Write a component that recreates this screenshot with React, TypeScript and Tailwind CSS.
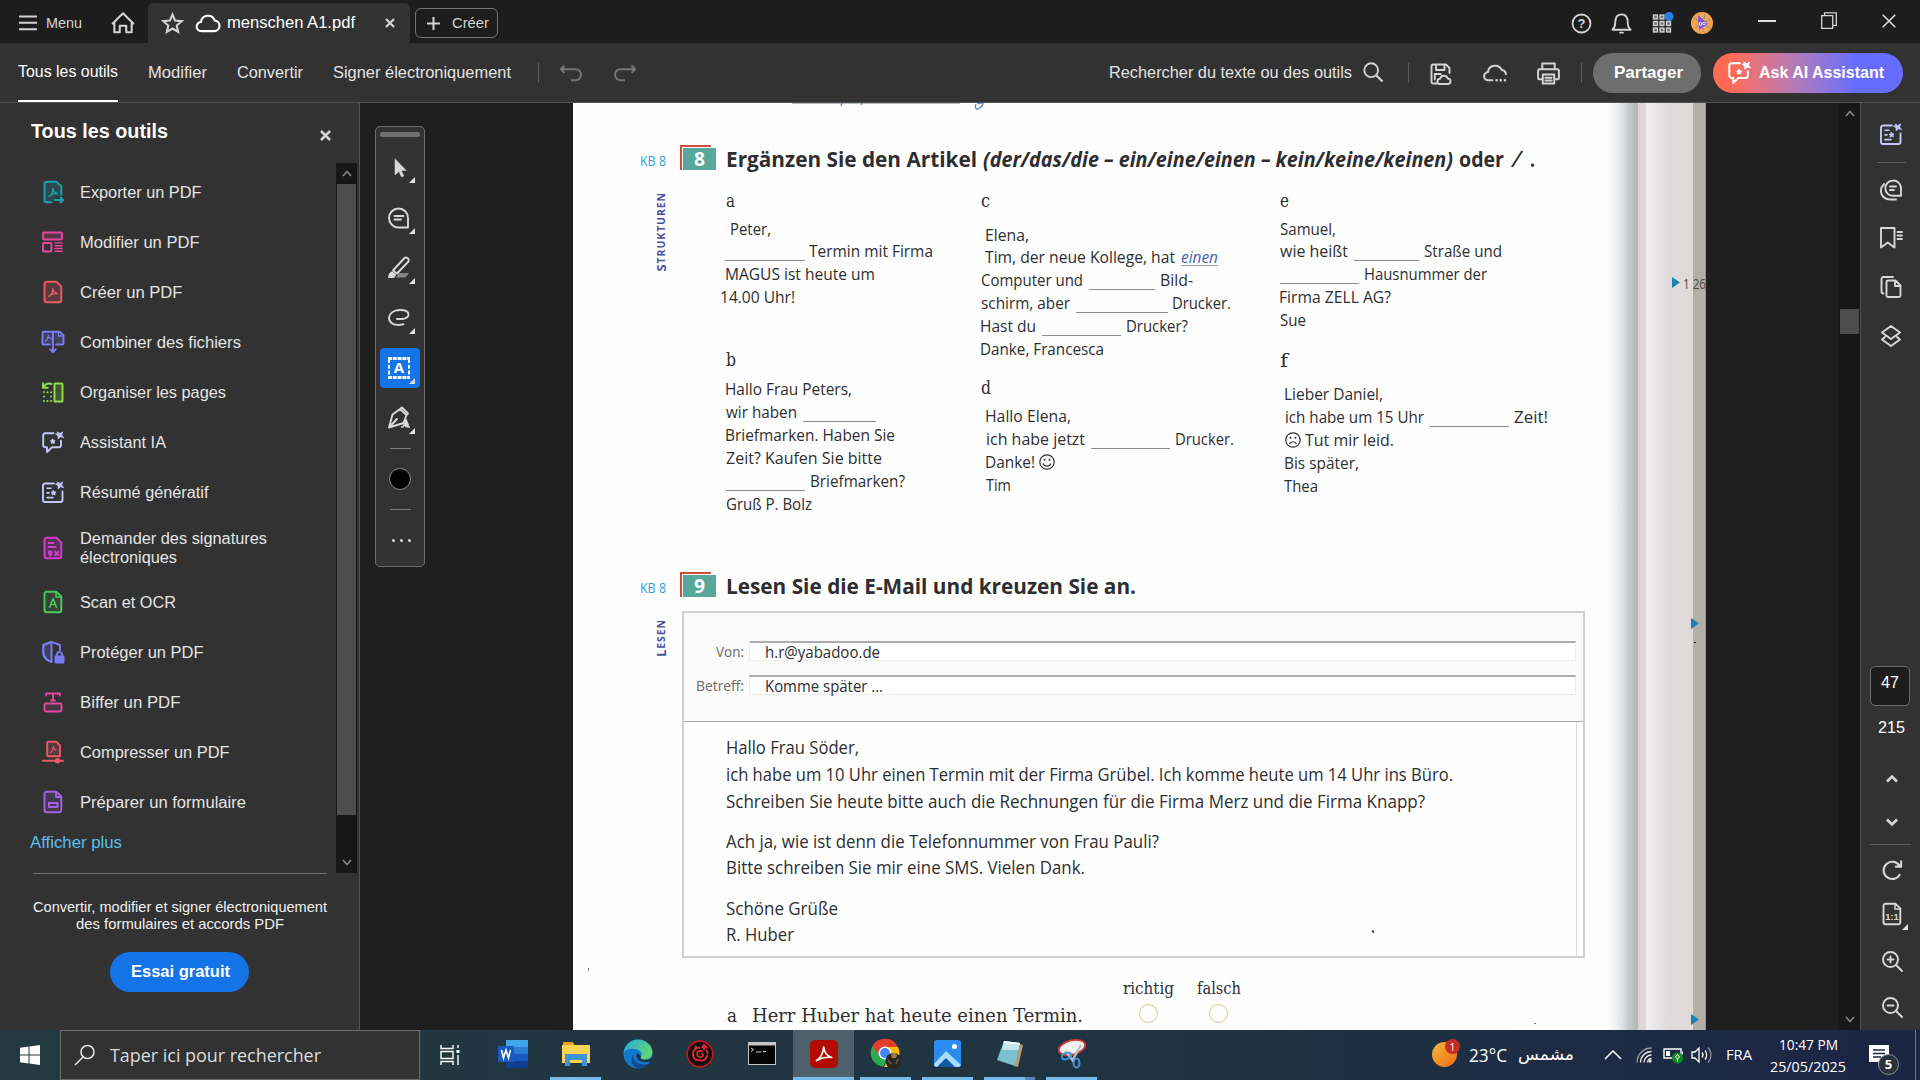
import React, { useLayoutEffect, useRef } from "react";

type Kids = { children?: React.ReactNode };

/** Sets one run of text to an exact advance width. */
function Fit({ w, className = "", children }: Kids & { w: number; className?: string }) {
  const ref = useRef<HTMLSpanElement>(null);
  useLayoutEffect(() => {
    const el = ref.current;
    if (!el) return;
    el.style.transform = "none";
    const natural = el.getBoundingClientRect().width;
    if (natural > 0) el.style.transform = `scaleX(${w / natural})`;
  });
  return (
    <span className={`inline-block shrink-0 whitespace-nowrap ${className}`} style={{ width: w }}>
      <span ref={ref} className="inline-block origin-left whitespace-nowrap">
        {children}
      </span>
    </span>
  );
}

function Ico({ s = 24, c = "", children, sw = 1.9 }: Kids & { s?: number; c?: string; sw?: number }) {
  return (
    <svg
      width={s}
      height={s}
      viewBox="0 0 24 24"
      className={`block shrink-0 ${c}`}
      fill="none"
      stroke="currentColor"
      strokeWidth={sw}
      strokeLinecap="round"
      strokeLinejoin="round"
    >
      {children}
    </svg>
  );
}

const pdfMark = "M8 16.5c2.2-1.4 3.8-4 3.9-8M11.9 8.8c.3 2.6 2 4.3 4.5 4.7M8 16c2-1.6 5-2.8 8.4-2.5";
const star4 = "M16.3 2.2l2.7 1.3 2.8-1.6-1.2 3.1 2 2.6-3-.8-2.5 2-.1-3.1-2.5-1.7 3-.6z";

function AiChat({ s = 24, c = "" }) {
  return (
    <Ico s={s} c={c}>
      <path d="M12.5 3.2H4.2a2 2 0 0 0-2 2v10a2 2 0 0 0 2 2H6V22l5-4.8h7a2 2 0 0 0 2-2v-4.4" />
      <path d={star4} fill="currentColor" strokeWidth="0.8" />
      <path d="M11.5 9l1 1.2 1.6.3-.9 1.3.2 1.6-1.6-.5-1.5.7.1-1.7-1-1.2 1.5-.5z" fill="currentColor" strokeWidth="0.8" />
    </Ico>
  );
}
function AiDoc({ s = 24, c = "" }) {
  return (
    <Ico s={s} c={c}>
      <path d="M12.8 3.5H4a2 2 0 0 0-2 2V20a2 2 0 0 0 2 2h15.500a2 2 0 0 0 2-2v-8.500" />
      <path d="M6 8.200h4M6 12.900h2M6 17.600h6" strokeWidth="1.6" />
      <path d={star4} fill="currentColor" strokeWidth="0.8" />
      <path d="M12.300 10.500l1 1.200 1.600.3-.9 1.300.2 1.600-1.600-.5-1.500.7.1-1.700-1-1.200 1.500-.5z" fill="currentColor" strokeWidth="0.8" />
    </Ico>
  );
}

const docPath = "M5.500 1.800h9.800l5 4.600v13.800a2 2 0 0 1-2 2H5.500a2 2 0 0 1-2-2V3.800a2 2 0 0 1 2-2z";

const tools: { label: string[]; w: number[]; icon: React.ReactNode }[] = [
  {
    label: ["Exporter un PDF"],
    w: [121.5],
    icon: (
      <Ico c="text-[#17a5ae]">
        <path d="M10.500 22.200h-5a2 2 0 0 1-2-2V3.800a2 2 0 0 1 2-2h9.800l5 4.600V15" fill="#17a5ae33" />
        <path d={pdfMark} strokeWidth="1.400" />
        <path d="M14 20h8M19.500 17.300l2.700 2.700-2.700 2.700" />
      </Ico>
    ),
  },
  {
    label: ["Modifier un PDF"],
    w: [119.5],
    icon: (
      <Ico c="text-[#e5479d]">
        <rect x="2" y="2.500" width="19" height="7" rx="1" fill="#e5479d33" />
        <rect x="2" y="13" width="8.500" height="8.500" rx="1" />
        <path d="M14 12.900h7.200M14 15.700h7.200M14 18.500h7.200M14 21.300h7.200" strokeWidth="1.400" />
      </Ico>
    ),
  },
  {
    label: ["Créer un PDF"],
    w: [102.5],
    icon: (
      <Ico c="text-[#ee5a64]">
        <path d={docPath} fill="#ee5a6433" />
        <path d={pdfMark} strokeWidth="1.400" />
      </Ico>
    ),
  },
  {
    label: ["Combiner des fichiers"],
    w: [161],
    icon: (
      <Ico c="text-[#7a7cf5]">
        <path d="M9 14.500H2.500A1 1 0 0 1 1.500 13.500V2.800A1 1 0 0 1 2.500 1.800H12V12M15 14.500h6.500a1 1 0 0 0 1-1V5.500L19 1.800H12" fill="#7a7cf533" />
        <path d="M4.500 11c1.700-1 2.700-3 2.800-5.500.3 2 1.300 3 3 3.300M17.500 2v4h4.500" strokeWidth="1.300" />
        <path d="M12 9v12.500M9.300 19.300l2.700 3 2.700-3" />
      </Ico>
    ),
  },
  {
    label: ["Organiser les pages"],
    w: [146],
    icon: (
      <Ico c="text-[#8ee04a]">
        <rect x="13.500" y="3.500" width="8" height="18" rx=".6" fill="#8ee04a33" />
        <path d="M2 3.200v4.600h4.800M2.500 7.500C4.500 3.700 7.500 3 10.500 4" />
        <path d="M3 12v.1M3 16.500v.1M3 21v.1M6.500 12.300h.1M10 12.300h.1M6.500 21h.1M10 21h.1M10 16.500v.1" strokeWidth="2" />
      </Ico>
    ),
  },
  { label: ["Assistant IA"], w: [86], icon: <AiChat c="text-[#c5c5ff]" /> },
  { label: ["Résumé génératif"], w: [128.5], icon: <AiDoc c="text-[#c5c5ff]" /> },
  {
    label: ["Demander des signatures", "électroniques"],
    w: [187, 97],
    icon: (
      <Ico c="text-[#d83bd2]">
        <path d={docPath} fill="#d83bd233" />
        <path d="M7.500 7h5M7.500 11h7" />
        <path d="M8 15.500h2.500v2L9.300 19.500 8 17.500zM14 15.700l3.300 3.300M17.300 15.700L14 19" />
      </Ico>
    ),
  },
  {
    label: ["Scan et OCR"],
    w: [96],
    icon: (
      <Ico c="text-[#4bca5f]">
        <path d={docPath} fill="#4bca5f22" />
        <path d="M15 2v5h5M8.500 17.500l3.500-9 3.500 9M9.700 14.500h4.600" strokeWidth="1.500" />
      </Ico>
    ),
  },
  {
    label: ["Protéger un PDF"],
    w: [123.5],
    icon: (
      <Ico c="text-[#7a7cf5]">
        <path d="M19 10V5L10.500 1.800 2.300 5v7c0 5 4 8.500 8.200 10" />
        <path d="M10.500 2v20C6 20.500 2.300 17 2.300 12V5z" fill="#7a7cf533" />
        <rect x="14.500" y="16.500" width="8" height="6" fill="currentColor" />
        <path d="M16 16v-1.500a2.500 2.500 0 0 1 5 0V16" />
      </Ico>
    ),
  },
  {
    label: ["Biffer un PDF"],
    w: [100.5],
    icon: (
      <Ico c="text-[#e5479d]">
        <path d="M5 5.500V3.500h14v2M12 3.500v7M10 10.500h4" />
        <rect x="3.500" y="13.500" width="17" height="8" rx="1.500" fill="#e5479d22" />
      </Ico>
    ),
  },
  {
    label: ["Compresser un PDF"],
    w: [149.5],
    icon: (
      <Ico c="text-[#ee5a64]">
        <path d="M7.500 1.800h8l3.500 3.500v11H7.500a1.300 1.300 0 0 1-1.300-1.300V3a1.300 1.300 0 0 1 1.300-1.200z" fill="#ee5a6433" />
        <path d="M9.500 12.500c1.700-1 2.700-3 2.800-6 .3 2.300 1.300 3.300 3 3.500" strokeWidth="1.200" />
        <path d="M2 20.700h20" />
        <circle cx="16.500" cy="20.700" r="1.800" fill="#ee5a64" />
      </Ico>
    ),
  },
  {
    label: ["Préparer un formulaire"],
    w: [166],
    icon: (
      <Ico c="text-[#a262e6]">
        <path d={docPath} fill="#a262e622" />
        <path d="M15 2v5h5" />
        <rect x="8" y="13" width="8.500" height="4" />
      </Ico>
    ),
  },
];

const Tri = ({ c = "" }) => (
  <svg width="6" height="6" viewBox="0 0 6 6" className={`absolute ${c}`}>
    <path d="M6 0v6H0z" fill="#e0e0e0" />
  </svg>
);

/* ---------- top bars ---------- */

function TitleBar() {
  return (
    <header className="flex h-[43px] shrink-0 bg-[#1d1d1d] text-[#d4d4d4]">
      <div className="flex w-[148px] items-center pt-[3px]">
        <svg width="18" height="16" viewBox="0 0 18 16" className="ml-[19px]">
          <path d="M0 1.500h18M0 7.800h18M0 14.200h18" stroke="#d4d4d4" strokeWidth="2" />
        </svg>
        <Fit w={36} className="ml-[9px] text-[15.500px]">Menu</Fit>
        <Ico s={26} c="ml-[28px]" sw={1.900}>
          <path d="M2.500 12.500L12 3l9.500 9.500M4 11v9.500h5v-6h6v6h5V11" />
        </Ico>
      </div>
      <div className="mt-[3px] flex w-[262px] items-center rounded-t-[5px] bg-[#323232]">
        <Ico s={23} c="ml-[13px]" sw={2.200}>
          <path d="M12 2.800l2.700 6.200 6.800.6-5.100 4.500 1.500 6.600-5.900-3.500-5.900 3.500 1.500-6.600-5.100-4.500 6.800-.6z" strokeLinejoin="miter" />
        </Ico>
        <Ico s={26} c="ml-[11px] text-white" sw={1.900}>
          <path d="M6 19.500a4.200 4.200 0 0 1-.5-8.400 6.500 6.500 0 0 1 12.600-1.500 5 5 0 0 1 .4 9.900z" />
        </Ico>
        <Fit w={128} className="ml-[6px] text-[16px] text-white">menschen A1.pdf</Fit>
        <svg width="10" height="10" viewBox="0 0 10 10" className="ml-[30px]">
          <path d="M1 1l8 8M9 1L1 9" stroke="#d4d4d4" strokeWidth="2.200" />
        </svg>
      </div>
      <div className="ml-[5px] mt-[8px] flex h-[30px] w-[83px] items-center rounded-[6px] border border-[#747474]">
        <svg width="13" height="13" viewBox="0 0 13 13" className="ml-[11px]">
          <path d="M6.500 0v13M0 6.500h13" stroke="#d4d4d4" strokeWidth="2" />
        </svg>
        <Fit w={37} className="ml-[12px] text-[15.500px]">Créer</Fit>
      </div>
      <div className="grow" />
      <div className="flex h-[43px] items-center pt-[3px]">
        <svg width="21" height="21" viewBox="0 0 21 21">
          <circle cx="10.500" cy="10.500" r="9" fill="none" stroke="#d4d4d4" strokeWidth="1.800" />
          <text x="10.500" y="15" textAnchor="middle" fontSize="13" fontWeight="bold" fill="#d4d4d4" fontFamily="Liberation Sans, sans-serif">?</text>
        </svg>
        <Ico s={23} c="ml-[18px]">
          <path d="M2.500 18.500h19c-2.500-2-3-4-3-7.500 0-5-2-8.500-6.500-8.500S5.500 6 5.500 11c0 3.500-.5 5.500-3 7.500zM10.500 21.500h3" />
        </Ico>
        <svg width="22" height="22" viewBox="0 0 22 22" className="ml-[19px]">
          {[0, 1, 2].map((r) =>
            [0, 1, 2].map((k) => (
              <rect key={`${r}${k}`} x={1.500 + k * 6.500} y={3 + r * 6.500} width="4" height="4" fill="#777" stroke="#d4d4d4" strokeWidth="1.300" />
            ))
          )}
          <circle cx="17" cy="4.500" r="4.500" fill="#2680eb" />
        </svg>
        <svg width="22" height="22" viewBox="0 0 22 22" className="ml-[17px]">
          <circle cx="11" cy="11" r="11" fill="#f4a44e" />
          <path d="M3 6l5 3M4 16l4-3M14 2l-1 5M19 7l-5 3M19 16l-4-2M12 20v-4" stroke="#7d8fa8" strokeWidth="1" />
          <path d="M7 3l10 9-9 6z" fill="#7b55e8" />
          <circle cx="9.500" cy="12" r="1.800" fill="#fff" />
          <circle cx="13" cy="11.500" r="1.600" fill="#fff" />
          <circle cx="9.500" cy="12" r=".8" fill="#333" />
          <circle cx="13" cy="11.500" r=".7" fill="#333" />
        </svg>
      </div>
      <div className="flex h-[41px] items-center">
        <div className="ml-[45px] h-[2px] w-[18px] bg-[#e0e0e0]" />
        <svg width="16" height="17" viewBox="0 0 16 17" className="ml-[45px]">
          <path d="M.7 3.700h11v12.600h-11zM3.500 3.500V.8h11.800v12.500h-3" fill="none" stroke="#d4d4d4" strokeWidth="1.300" />
        </svg>
        <svg width="14" height="14" viewBox="0 0 14 14" className="ml-[45px] mr-[24px]">
          <path d="M.7.7l12.600 12.600M13.300.7L.7 13.300" stroke="#e0e0e0" strokeWidth="1.500" />
        </svg>
      </div>
    </header>
  );
}

const Sep = ({ c = "" }) => <div className={`h-[20px] w-px shrink-0 bg-[#5c5c5c] ${c}`} />;

function ToolBar() {
  return (
    <nav className="flex h-[60px] shrink-0 items-center border-b border-[#525252] bg-[#323232] text-[16px] text-[#e2e2e2]">
      <div className="ml-[18px] flex h-full items-center border-b-2 border-white pt-[1px] text-white">
        <Fit w={100}>Tous les outils</Fit>
      </div>
      <Fit w={59} className="ml-[30px]">Modifier</Fit>
      <Fit w={66} className="ml-[30px]">Convertir</Fit>
      <Fit w={178} className="ml-[30px]">Signer électroniquement</Fit>
      <Sep c="ml-[27px]" />
      <Ico s={24} c="ml-[20px] mt-[2px] text-[#757575]" sw={2}>
        <path d="M5.500 3.500L2 7.200 5.500 11M2.500 7.200h14a5.500 5.500 0 0 1 0 11H12" strokeLinecap="butt" />
      </Ico>
      <Ico s={24} c="ml-[30px] mt-[2px] text-[#757575]" sw={2}>
        <path d="M18.500 3.500L22 7.200 18.500 11M21.500 7.200h-14a5.500 5.500 0 0 0 0 11H12" strokeLinecap="butt" />
      </Ico>
      <div className="grow" />
      <Fit w={243}>Rechercher du texte ou des outils</Fit>
      <svg width="21" height="21" viewBox="0 0 21 21" className="ml-[11px]">
        <path d="M13 13l6.500 6.500" stroke="#d4d4d4" strokeWidth="2.200" />
        <circle cx="8.200" cy="8.200" r="6.900" fill="none" stroke="#d4d4d4" strokeWidth="1.900" />
      </svg>
      <Sep c="ml-[24px]" />
      <Ico s={24} c="ml-[20px] mt-[2px] text-[#d4d4d4]">
        <path d="M8 21.500H4a1.500 1.500 0 0 1-1.500-1.500V4A1.500 1.500 0 0 1 4 2.500h13L20.500 6v5M7 2.500V8h8.500V2.500M5.800 17.500V12h6" />
        <path d="M11 22a2.600 2.600 0 0 1 0-5.200 4 4 0 0 1 7.700-.3 2.800 2.800 0 0 1 .8 5.500z" />
      </Ico>
      <Ico s={25} c="ml-[30px] text-[#d4d4d4]">
        <path d="M9 19.500H5.200a4 4 0 0 1-.3-8 5.500 5.500 0 0 1-.2.100A7 7 0 0 1 18 9.500a4.500 4.500 0 0 1 4 4" />
        <path d="M13 19.500h.1M17 19.500h.1M21 19.500h.1" strokeWidth="2.400" />
      </Ico>
      <Ico s={25} c="ml-[28px] mt-[2px] text-[#d4d4d4]">
        <path d="M6 8V2.500h12V8M6 17.500H3.500A1.500 1.500 0 0 1 2 16V9.500A1.500 1.500 0 0 1 3.500 8h17A1.500 1.500 0 0 1 22 9.500V16a1.500 1.500 0 0 1-1.500 1.500H18M6.500 13h11v8.500h-11zM9 16h6M9 18.800h6" />
      </Ico>
      <Sep c="ml-[20px]" />
      <button className="ml-[11px] flex h-[40px] w-[108px] items-center rounded-full bg-[#6e6e6e] pl-[19px] font-bold text-white">
        <Fit w={69}>Partager</Fit>
      </button>
      <button className="ml-[12px] mr-[17px] flex h-[40px] w-[190px] items-center rounded-full bg-linear-to-r from-[#ff6a55] from-10% to-[#666cff] to-75% font-bold text-white">
        <AiChat s={25} c="ml-[14px]" />
        <Fit w={125} className="ml-[7px]">Ask AI Assistant</Fit>
      </button>
    </nav>
  );
}

/* ---------- left panel ---------- */

const Chev = ({ d, c = "" }: { d: "up" | "down"; c?: string }) => (
  <svg width="10" height="7" viewBox="0 0 10 7" className={c}>
    <path d={d === "up" ? "M1 6l4-4.500L9 6" : "M1 1l4 4.500L9 1"} fill="none" stroke="#858585" strokeWidth="1.700" />
  </svg>
);

function LeftPanel() {
  return (
    <aside className="flex w-[360px] shrink-0 flex-col border-r border-[#525252] bg-[#323232] text-[#e4e4e4]">
      <div className="flex h-[60px] items-start pl-[31px]">
        <Fit w={137} className="mt-[16px] text-[20px] font-bold leading-[24px] text-white">Tous les outils</Fit>
        <svg width="11" height="11" viewBox="0 0 11 11" className="ml-[152px] mt-[27px]">
          <path d="M1 1l9 9M10 1l-9 9" stroke="#d4d4d4" strokeWidth="2.500" />
        </svg>
      </div>
      <div className="flex h-[710px]">
        <div className="w-[336px] pt-[4px]">
          {tools.map((t) => (
            <div key={t.label[0]} className={`flex items-center pl-[41px] ${t.label.length > 1 ? "h-[60px] pt-px" : "h-[50px]"}`}>
              {t.icon}
              <div className="ml-[15px] flex flex-col">
                {t.label.map((l, i) => (
                  <Fit key={l} w={t.w[i]} className="h-[19px] text-[16px] leading-[19px]">{l}</Fit>
                ))}
              </div>
            </div>
          ))}
          <Fit w={92} className="ml-[30px] mt-[6px] text-[16px] leading-[20px] text-[#58c0f0]">Afficher plus</Fit>
        </div>
        <div className="flex w-[21px] flex-col items-center bg-[#171717]">
          <div className="flex h-[21px] items-center"><Chev d="up" /></div>
          <div className="h-[631px] w-[19px] bg-[#4d4d4d]" />
          <div className="flex grow items-end pb-[7px]"><Chev d="down" /></div>
        </div>
      </div>
      <div className="ml-[33px] h-px w-[294px] bg-[#707070]" />
      <div className="mt-[25px] flex flex-col items-center text-[14.500px] leading-[17px] text-[#f0f0f0]">
        <Fit w={294} className="h-[17px]">Convertir, modifier et signer électroniquement</Fit>
        <Fit w={208} className="h-[17px]">des formulaires et accords PDF</Fit>
      </div>
      <button className="ml-[110px] mt-[19px] flex h-[40px] w-[139px] items-center rounded-full bg-[#1473e6] pl-[20px] text-[16px] font-bold text-white">
        <Fit w={99}>Essai gratuit</Fit>
      </button>
    </aside>
  );
}

/* ---------- floating tool strip ---------- */

function Strip() {
  return (
    <div className="ml-[15px] mt-[23px] flex h-[441px] w-[50px] shrink-0 flex-col items-center rounded-[5px] border border-[#6b6b6b] bg-[#323232] text-[#d8d8d8]">
      <div className="mt-[5px] h-[5px] w-[40px] rounded-[2px] bg-[#707070]" />
      <div className="relative mt-[11px] flex h-[40px] w-[40px] items-center justify-center">
        <Ico s={24}><path d="M7 3v16l4-3.500L13.500 21l2.300-1-2.500-5.500H18z" fill="currentColor" strokeWidth="0.500" /></Ico>
        <Tri c="bottom-[5px] right-[5px]" />
      </div>
      <div className="relative mt-[10px] flex h-[40px] w-[40px] items-center justify-center">
        <Ico s={24} c="mr-[2px]"><path d="M11.500 2.500a9.500 9.500 0 1 0 0 19H21V12a9.500 9.500 0 0 0-9.500-9.500zM7.500 10h9M7.500 13.500h6.500" /></Ico>
        <Tri c="bottom-[4px] right-[5px]" />
      </div>
      <div className="relative mt-[10px] flex h-[40px] w-[40px] items-center justify-center">
        <Ico s={24} c="mr-[2px]">
          <path d="M12 17h10l-3.500 4.500H9z" fill="#848484" stroke="none" />
          <path d="M6 14.500L17 2.500a2.600 2.600 0 0 1 4 3.500L10 17.500z" />
          <path d="M5 16.500c-1.500.5-2.500 2-3 4.500h4c1.500-.5 2-1.500 2-2.500z" fill="currentColor" />
        </Ico>
        <Tri c="bottom-[4px] right-[5px]" />
      </div>
      <div className="relative mt-[10px] flex h-[40px] w-[40px] items-center justify-center">
        <Ico s={24} c="mr-[2px]"><path d="M10 13h5.500c4-.3 6.500-2.500 6-5C21 5 17 3.800 12.500 4 7 4.300 2.500 7 2 11.500 1.700 16 6 19 11.500 19c2 0 3.500-.3 5-.8" /></Ico>
        <Tri c="bottom-[4px] right-[5px]" />
      </div>
      <div className="relative mt-[10px] flex h-[40px] w-[40px] items-center justify-center rounded-[4px] bg-[#1473e6]">
        <svg width="24" height="24" viewBox="0 0 24 24" className="mr-[2px]">
          <path d="M1 2.500h22M1 21.500h22" stroke="#fff" strokeWidth="3" strokeDasharray="4 .8" fill="none" />
          <path d="M2 3v18M22 3v18" stroke="#fff" strokeWidth="2" strokeDasharray="4 1.800" fill="none" />
          <text x="12" y="17" textAnchor="middle" fontSize="15" fontWeight="bold" fill="#fff" fontFamily="Open Sans, sans-serif">A</text>
        </svg>
        <Tri c="bottom-[4px] right-[5px]" />
      </div>
      <div className="relative mt-[10px] flex h-[40px] w-[40px] items-center justify-center">
        <Ico s={24} c="mr-[2px]">
          <path d="M13 3l6.500 6-3 8L2 21.500 5.500 8.500zM13 3l2-1.500 6 6-1.500 1.500M2.500 21L10 13M15 21c2 0 2-2.500 3-3s0 3 2 2.500 1 0 2 .5" />
          <path d="M19 14l2 5h-3z" fill="currentColor" />
        </Ico>
        <Tri c="bottom-[4px] right-[5px]" />
      </div>
      <div className="mt-[10px] h-px w-[21px] bg-[#7a7a7a]" />
      <div className="mt-[19px] h-[22px] w-[22px] rounded-full border border-[#8a8a8a] bg-black" />
      <div className="mt-[19px] h-px w-[21px] bg-[#7a7a7a]" />
      <div className="mt-[29px] ml-[2px] flex gap-[5px]">
        <span className="h-[3px] w-[3px] rounded-full bg-[#d8d8d8]" />
        <span className="h-[3px] w-[3px] rounded-full bg-[#d8d8d8]" />
        <span className="h-[3px] w-[3px] rounded-full bg-[#d8d8d8]" />
      </div>
    </div>
  );
}

/* ---------- document ---------- */

type Seg = { x: number; e: number; t?: React.ReactNode; k?: "ink" | "face" };

/** One worksheet line: words and blanks between start (x) and end (e) positions. */
function Line({ segs }: { segs: Seg[] }) {
  let pos = 0;
  return (
    <div className="flex h-[22.900px] leading-[22.900px]">
      {segs.map((s, i) => {
        const ml = s.x - pos;
        pos = s.e;
        const w = s.e - s.x;
        return (
          <span key={i} className="block shrink-0" style={{ marginLeft: ml, width: w }}>
            {s.k === "face" ? (
              <span className="block pt-[3px]">{s.t}</span>
            ) : s.k === "ink" ? (
              <span className="block h-[20px] border-b border-[#9a9a9a] text-[17px] italic leading-[21px] text-[#3f63b5]">
                <Fit w={w}>{s.t}</Fit>
              </span>
            ) : s.t ? (
              <Fit w={w}>{s.t}</Fit>
            ) : (
              <span className="block h-[21px] border-b border-[#8c8c8c]" />
            )}
          </span>
        );
      })}
    </div>
  );
}

const Letter = ({ children, w = 9 }: Kids & { w?: number }) => (
  <div className="h-[23px] font-['DejaVu_Serif',serif] text-[18.500px] leading-[23px]">
    <Fit w={w}>{children}</Fit>
  </div>
);

const Face = ({ sad = false }) => (
  <svg width="16" height="16" viewBox="0 0 16 16">
    <circle cx="8" cy="8" r="7.200" fill="none" stroke="#2e2e30" strokeWidth="1.200" />
    <circle cx="5.500" cy="5.800" r="1" fill="#2e2e30" />
    <circle cx="10.500" cy="5.800" r="1" fill="#2e2e30" />
    <path d={sad ? "M4.500 12c1.500-3 5.500-3 7 0" : "M4 9.500c1.500 3.500 6.500 3.500 8 0"} fill="none" stroke="#2e2e30" strokeWidth="1.200" />
  </svg>
);

const Badge = ({ n }: { n: string }) => (
  <div className="ml-[14px] h-[25px] w-[36px] shrink-0 bg-[linear-gradient(#c9503f,#c9503f)] bg-[length:31px_25px] bg-no-repeat pl-[2px] pt-[2px]">
    <div className="h-full w-full bg-white pl-px pt-px">
      <div className="flex h-full w-full justify-center bg-[#57a79a] text-[20px] font-bold leading-[21px] text-white">
        <Fit w={11}>{n}</Fit>
      </div>
    </div>
  </div>
);

const RowHead = ({ n, children }: Kids & { n: string }) => (
  <div className="flex h-[25px] shrink-0 items-start pl-[67px]">
    <Fit w={26} className="mt-[6px] text-[14.500px] leading-[20px] text-[#34a0d8]">KB 8</Fit>
    <Badge n={n} />
    <div className="ml-[10px] mt-[2px] flex text-[21px] font-bold leading-[24px]">{children}</div>
  </div>
);

const Side = ({ first, rest }: { first: string; rest: string }) => (
  <span className="rotate-180 whitespace-nowrap text-[13px] font-bold leading-[14px] tracking-[0.900px] text-[#4b4f9e] [writing-mode:vertical-rl]">
    {first}
    <span className="text-[10.500px]">{rest}</span>
  </span>
);

const mail: { t: string; w: number; gap?: boolean }[] = [
  { t: "Hallo Frau Söder,", w: 133 },
  { t: "ich habe um 10 Uhr einen Termin mit der Firma Grübel. Ich komme heute um 14 Uhr ins Büro.", w: 727 },
  { t: "Schreiben Sie heute bitte auch die Rechnungen für die Firma Merz und die Firma Knapp?", w: 699 },
  { t: "Ach ja, wie ist denn die Telefonnummer von Frau Pauli?", w: 433, gap: true },
  { t: "Bitte schreiben Sie mir eine SMS. Vielen Dank.", w: 359 },
  { t: "Schöne Grüße", w: 112, gap: true },
  { t: "R. Huber", w: 68 },
];

const Marker = ({ c = "" }) => (
  <svg width="8" height="11" viewBox="0 0 8 11" className={`absolute ${c}`}>
    <path d="M0 0l8 5.500L0 11z" fill="#1b82ab" />
  </svg>
);

function Page() {
  return (
    <div className="relative flex h-full w-[1133px] shrink-0 overflow-hidden bg-[#fefefe] font-['Open_Sans',sans-serif] text-[#2e2e30]">
      <svg width="420" height="10" viewBox="0 0 420 10" className="absolute left-0 top-0">
        <path d="M219 .3h168" stroke="#8a8f96" strokeWidth=".8" />
        <path d="M269 0l-1 3M289 0l-1 2M404 0c3 1 5 0 6-1M403 1c-2 5 1 6 4 4s3-4 3-5" stroke="#5b7fd0" strokeWidth="1.300" fill="none" />
      </svg>
      <div className="flex w-[1034px] shrink-0 flex-col pt-[42px]">
        <RowHead n="8">
          <Fit w={251}>Ergänzen Sie den Artikel</Fit>
          <Fit w={470} className="ml-[6px] italic">(der/das/die – ein/eine/einen – kein/keine/keinen)</Fit>
          <Fit w={45} className="ml-[6px]">oder</Fit>
          <Fit w={9} className="ml-[8px] font-normal italic">/</Fit>
          <Fit w={5} className="ml-[9px]">.</Fit>
        </RowHead>
        <div className="flex h-[402px] shrink-0 text-[16.500px]">
          <div className="w-[153px] pl-[81px] pt-[22px]"><Side first="S" rest="TRUKTUREN" /></div>
          <div className="w-[255px] pt-[19px]">
            <Letter>a</Letter>
            <div className="mt-[5.500px]">
              <Line segs={[{ x: 4, e: 45, t: "Peter," }]} />
              <Line segs={[{ x: -1, e: 79 }, { x: 83, e: 207, t: "Termin mit Firma" }]} />
              <Line segs={[{ x: -1, e: 149, t: "MAGUS ist heute um" }]} />
              <Line segs={[{ x: -6, e: 69, t: "14.00 Uhr!" }]} />
            </div>
            <div className="mt-[38.500px]"><Letter w={10}>b</Letter></div>
            <div className="mt-[7.500px]">
              <Line segs={[{ x: -1, e: 126, t: "Hallo Frau Peters," }]} />
              <Line segs={[{ x: 0, e: 71, t: "wir haben" }, { x: 77, e: 150 }]} />
              <Line segs={[{ x: -1, e: 169, t: "Briefmarken. Haben Sie" }]} />
              <Line segs={[{ x: 0, e: 156, t: "Zeit? Kaufen Sie bitte" }]} />
              <Line segs={[{ x: 0, e: 79 }, { x: 84, e: 179, t: "Briefmarken?" }]} />
              <Line segs={[{ x: 0, e: 86, t: "Gruß P. Bolz" }]} />
            </div>
          </div>
          <div className="w-[299px] pt-[19px]">
            <Letter>c</Letter>
            <div className="mt-[11.500px]">
              <Line segs={[{ x: 4, e: 48, t: "Elena," }]} />
              <Line segs={[{ x: 4, e: 194, t: "Tim, der neue Kollege, hat" }, { x: 200, e: 237, t: "einen", k: "ink" }]} />
              <Line segs={[{ x: 0, e: 102, t: "Computer und" }, { x: 108, e: 174 }, { x: 179, e: 212, t: "Bild-" }]} />
              <Line segs={[{ x: 0, e: 89, t: "schirm, aber" }, { x: 95, e: 187 }, { x: 191, e: 250, t: "Drucker." }]} />
              <Line segs={[{ x: -1, e: 55, t: "Hast du" }, { x: 61, e: 140 }, { x: 145, e: 207, t: "Drucker?" }]} />
              <Line segs={[{ x: -1, e: 123, t: "Danke, Francesca" }]} />
            </div>
            <div className="mt-[15px]"><Letter w={10}>d</Letter></div>
            <div className="mt-[6px]">
              <Line segs={[{ x: 4, e: 90, t: "Hallo Elena," }]} />
              <Line segs={[{ x: 5, e: 104, t: "ich habe jetzt" }, { x: 110, e: 189 }, { x: 194, e: 253, t: "Drucker." }]} />
              <Line segs={[{ x: 4, e: 54, t: "Danke!" }, { x: 58, e: 74, t: <Face />, k: "face" }]} />
              <Line segs={[{ x: 5, e: 30, t: "Tim" }]} />
            </div>
          </div>
          <div className="w-[290px] pt-[19px]">
            <Letter>e</Letter>
            <div className="mt-[5.500px]">
              <Line segs={[{ x: 0, e: 56, t: "Samuel," }]} />
              <Line segs={[{ x: 0, e: 68, t: "wie heißt" }, { x: 74, e: 139 }, { x: 144, e: 222, t: "Straße und" }]} />
              <Line segs={[{ x: 0, e: 79 }, { x: 84, e: 207, t: "Hausnummer der" }]} />
              <Line segs={[{ x: -1, e: 111, t: "Firma ZELL AG?" }]} />
              <Line segs={[{ x: 0, e: 26, t: "Sue" }]} />
            </div>
            <div className="mt-[17px]"><Letter w={8}>f</Letter></div>
            <div className="mt-[11.500px]">
              <Line segs={[{ x: 4, e: 103, t: "Lieber Daniel," }]} />
              <Line segs={[{ x: 5, e: 144, t: "ich habe um 15 Uhr" }, { x: 150, e: 229 }, { x: 234, e: 268, t: "Zeit!" }]} />
              <Line segs={[{ x: 5, e: 21, t: <Face sad />, k: "face" }, { x: 25, e: 114, t: "Tut mir leid." }]} />
              <Line segs={[{ x: 4, e: 79, t: "Bis später," }]} />
              <Line segs={[{ x: 4, e: 38, t: "Thea" }]} />
            </div>
          </div>
        </div>
        <RowHead n="9">
          <Fit w={410}>Lesen Sie die E-Mail und kreuzen Sie an.</Fit>
        </RowHead>
        <div className="mt-[14px] flex h-[347px] shrink-0">
          <div className="w-[109px] pl-[81px] pt-[8px]"><Side first="L" rest="ESEN" /></div>
          <div className="flex w-[903px] flex-col border-2 border-[#d0d0d0]">
            <div className="flex h-[109px] shrink-0 flex-col border-b border-[#a9a9a9] bg-[#fafafa] pt-[28px] text-[16px]">
              <div className="flex h-[20px] items-center">
                <Fit w={28} className="ml-[32px] text-[15px] text-[#6b6b68]">Von:</Fit>
                <div className="ml-[5px] flex h-[20px] w-[827px] items-center border border-t-2 border-[#ececec] border-t-[#adadad] bg-white">
                  <Fit w={115} className="ml-[15px]">h.r@yabadoo.de</Fit>
                </div>
              </div>
              <div className="mt-[14px] flex h-[20px] items-center">
                <Fit w={48} className="ml-[12px] text-[15px] text-[#6b6b68]">Betreff:</Fit>
                <div className="ml-[5px] flex h-[20px] w-[827px] items-center border border-t-2 border-[#ececec] border-t-[#adadad] bg-white">
                  <Fit w={118} className="ml-[15px]">Komme später ...</Fit>
                </div>
              </div>
            </div>
            <div className="mr-[6px] grow border-r border-[#dcdcdc] pl-[42px] pt-[12px] text-[18.500px]">
              {mail.map((m) => (
                <div key={m.t} className={`flex h-[26.800px] leading-[26.800px] ${m.gap ? "mt-[13.300px]" : ""}`}>
                  <Fit w={m.w}>{m.t}</Fit>
                </div>
              ))}
            </div>
          </div>
        </div>
        <div className="mt-[20px] flex pl-[550px] font-['DejaVu_Serif',serif] text-[17px] leading-[20px]">
          <Fit w={51}>richtig</Fit>
          <Fit w={44} className="ml-[23px]">falsch</Fit>
        </div>
        <div className="mt-[5px] flex font-['DejaVu_Serif',serif] text-[19px] leading-[24px]">
          <Fit w={10} className="ml-[154px]">a</Fit>
          <Fit w={331} className="ml-[15px]">Herr Huber hat heute einen Termin.</Fit>
          <span className="ml-[56px] mt-px h-[19px] w-[19px] rounded-full border-[1.500px] border-[#d6c98f]" />
          <span className="ml-[51px] mt-px h-[19px] w-[19px] rounded-full border-[1.500px] border-[#d6c98f]" />
        </div>
      </div>
      <div className="h-full w-[31px] bg-[linear-gradient(90deg,#fefefe_0%,#f1f4f5_25%,#dce2e4_50%,#c2c9ca_72%,#b4b8b6_100%)]" />
      <div className="h-full w-[8px] bg-linear-to-r from-[#dad3d2] to-[#e3d9da]" />
      <div className="h-full w-[47px] bg-linear-to-r from-[#f1eef1] via-[#e0dcde] via-45% to-[#dedad9]" />
      <div className="h-full w-[13px] border-r border-[#8d9a93] bg-[#b1afa8]" />
      <Marker c="left-[1099px] top-[174px]" />
      <span className="absolute left-[1110px] top-[170px] text-[15px] leading-[20px] text-[#4a4a4a]"><Fit w={23}>1 26</Fit></span>
      <Marker c="left-[1118px] top-[515px]" />
      <Marker c="left-[1118px] top-[911px]" />
      <span className="absolute left-[1121px] top-[539px] h-px w-[2px] bg-black" />
      <span className="absolute left-[799px] top-[827px] h-[3px] w-[2px] -rotate-30 bg-[#444]" />
      <span className="absolute left-[15px] top-[865px] h-[3px] w-px bg-[#777]" />
      <span className="absolute left-[961px] top-[920px] h-px w-[2px] bg-[#777]" />
    </div>
  );
}

/* ---------- right panel ---------- */

function RightPanel() {
  return (
    <aside className="flex w-[60px] shrink-0 flex-col border-l border-[#525252] bg-[#323232] pl-[18px] text-[#d8d8d8]">
      <AiDoc c="mt-[19px] text-[#c5c5ff]" />
      <div className="-ml-[2px] mt-[16px] h-px w-[29px] bg-[#5c5c5c]" />
      <Ico c="mt-[15px]">
        <path d="M14 2.500a7.500 7.500 0 1 0 0 15.300h8V10a7.700 7.700 0 0 0-8-7.500zM11 8.500h6M11 12h4M5 6c-4 4-4 9-1 12.500C7 21.500 10 21.700 17 21.500" />
      </Ico>
      <Ico c="mt-[24px]">
        <path d="M2 2h13.500v19.500L8.700 16.500 2 21.500zM18.500 6H23M18.500 9.500H23M18.500 13H23" />
      </Ico>
      <Ico c="mt-[25px]">
        <path d="M9 5.500h7.500l5 5v10a1.500 1.500 0 0 1-1.500 1.500H9A1.500 1.500 0 0 1 7.500 20.500V7A1.500 1.500 0 0 1 9 5.500zM16 6v5h5M4.500 18.500A2 2 0 0 1 2.500 16.500V4A2 2 0 0 1 4.500 2H14" />
      </Ico>
      <Ico c="mt-[25px]">
        <path d="M12 2l9 6.500-9 6.500-9-6.500zM6 13l-3 2.500L12 22l9-6.500L18 13" />
      </Ico>
      <div className="-ml-[9px] mt-[318px] flex h-[40px] w-[40px] shrink-0 items-center justify-center rounded-[5px] border border-[#6b6b6b] bg-[#1d1d1d] pb-[7px] text-[16px] text-white">
        <Fit w={18}>47</Fit>
      </div>
      <Fit w={27} className="-ml-px mt-[12px] text-[16px] leading-[20px] text-white">215</Fit>
      <svg width="14" height="9" viewBox="0 0 14 9" className="ml-[6px] mt-[36px] shrink-0">
        <path d="M2 7.500l5-5 5 5" fill="none" stroke="#d8d8d8" strokeWidth="2.600" />
      </svg>
      <svg width="14" height="9" viewBox="0 0 14 9" className="ml-[6px] mt-[35px] shrink-0">
        <path d="M2 1.500l5 5 5-5" fill="none" stroke="#d8d8d8" strokeWidth="2.600" />
      </svg>
      <div className="-ml-[9px] mt-[17px] h-px w-[41px] shrink-0 bg-[#5c5c5c]" />
      <Ico s={23} c="ml-[2px] mt-[14px]" sw={2.200}>
        <path d="M19.500 16.500a9 9 0 1 1-.5-10M21 2.500V8h-5.500" />
      </Ico>
      <div className="relative mt-[20px] w-[30px]">
        <svg width="24" height="24" viewBox="0 0 24 24" className="ml-[1px]">
          <path d={docPath} fill="none" stroke="#d8d8d8" strokeWidth="1.900" />
          <path d="M15 2v5h5" fill="none" stroke="#d8d8d8" strokeWidth="1.500" />
          <text x="12" y="17.500" textAnchor="middle" fontSize="9.500" fontWeight="bold" fill="#d8d8d8" fontFamily="Liberation Sans, sans-serif">1:1</text>
        </svg>
        <Tri c="-bottom-[4px] right-[1px]" />
      </div>
      <Ico s={24} c="ml-[2px] mt-[24px]">
        <circle cx="9.500" cy="9.500" r="7.500" /><path d="M15 15l6 6M9.500 6.500v6M6.500 9.500h6" />
      </Ico>
      <Ico s={24} c="ml-[2px] mt-[22px]">
        <circle cx="9.500" cy="9.500" r="7.500" /><path d="M15 15l6 6M6.500 9.500h6" />
      </Ico>
    </aside>
  );
}

/* ---------- taskbar ---------- */

const Task = ({ w = 51, ml = 11, run = true, children }: Kids & { w?: number; ml?: number; run?: boolean }) => (
  <div className="flex h-full shrink-0 flex-col items-center" style={{ width: w, marginLeft: ml }}>
    <div className="flex h-[47px] items-center">{children}</div>
    {run && <div className="h-[3px] w-full bg-[#76b9ed]" />}
  </div>
);

function Taskbar() {
  return (
    <footer className="flex h-[50px] shrink-0 bg-linear-to-r from-[#22393f] via-[#1f3342] via-60% to-[#1b2544] font-['Open_Sans',sans-serif] text-white">
      <div className="flex w-[60px] items-center pl-[20px]">
        <svg width="20" height="20" viewBox="0 0 20 20">
          <path d="M0 2.800l8.500-1.200v8H0zM9.500 1.400L20 0v9.600H9.500zM0 10.500h8.500v8L0 17.300zM9.500 10.500H20V20L9.500 18.600z" fill="#fff" />
        </svg>
      </div>
      <div className="flex w-[360px] items-center border border-[#6d6d6d] bg-[#323232]">
        <svg width="22" height="22" viewBox="0 0 22 22" className="ml-[13px]">
          <circle cx="13.500" cy="8" r="6.500" fill="none" stroke="#e8e8e8" strokeWidth="1.500" />
          <path d="M9 13l-8 8" stroke="#e8e8e8" strokeWidth="1.500" />
        </svg>
        <Fit w={211} className="ml-[14px] text-[18.500px] text-[#dcdcdc]">Taper ici pour rechercher</Fit>
      </div>
      <div className="flex w-[61px] items-center pl-[20px]">
        <svg width="21" height="20" viewBox="0 0 21 20" fill="none" stroke="#fff" strokeWidth="1.400">
          <path d="M1 0v3.500h12V0M1 20v-3.500h12V20M1 6.500h12v7H1zM18 0v3M18 10v10" />
          <path d="M16.500 5h3v3h-3z" fill="#fff" stroke="none" />
        </svg>
      </div>
      <Task ml={6} run={false}>
        <svg width="30" height="28" viewBox="0 0 30 28">
          <rect x="8" y="0" width="22" height="28" rx="1.500" fill="#2b7cd3" />
          <path d="M8 0h22v7H8z" fill="#41a5ee" /><path d="M8 14h22v7H8z" fill="#185abd" /><path d="M8 21h22v7H8z" fill="#103f91" />
          <rect x="0" y="6" width="16" height="16" rx="1" fill="#185abd" />
          <path d="M3.500 10l2 8 2.500-8 2.500 8 2-8" fill="none" stroke="#fff" strokeWidth="1.600" />
        </svg>
      </Task>
      <Task ml={12}>
        <svg width="28" height="26" viewBox="0 0 28 26">
          <path d="M1 2a1 1 0 0 1 1-1h9l2 4H1z" fill="#e8a21b" />
          <path d="M0 4h27a1 1 0 0 1 1 1v17H0z" fill="#fcd354" />
          <path d="M3 13h22v12h-5v-6H8v6H3z" fill="#3f94d8" />
        </svg>
      </Task>
      <Task run={false}>
        <svg width="30" height="30" viewBox="0 0 30 30">
          <defs>
            <linearGradient id="edgeA" x1="0" y1="0" x2="1" y2=".5"><stop offset="0" stopColor="#2aa7e8" /><stop offset="1" stopColor="#5fd672" /></linearGradient>
          </defs>
          <circle cx="15" cy="15" r="14.500" fill="#1277cf" />
          <path d="M.5 14C2 5 8 .5 15 .5S29.500 6 29.500 13c0 5-4 7.500-8 7.500-3 0-4.500-1-3.500-3s1-5.500-4-7C9 9 3 9.500.5 14z" fill="url(#edgeA)" />
          <path d="M10 16c0 6 5 9.500 10 9.500 3 0 5.500-1 7-2C25 27 20 29.500 15 29.500 8 28 7 19 10 16z" fill="#114a8b" />
          <path d="M14 14c-2 4 1 9 8 9h6c1-1 1.500-3 1.800-5-2 2.500-5 3-8 2.800-4-.2-5-2-3.800-3.600z" fill="#20323f" />
        </svg>
      </Task>
      <Task run={false}>
        <svg width="28" height="28" viewBox="0 0 28 28">
          <circle cx="14" cy="14" r="12.800" fill="#0e0e10" stroke="#c4161c" strokeWidth="1.700" />
          <path d="M10 6l-1 4M14 8c-4-1-7 2-7 6 0 5 4 7 7 6 3 2 7-1 7-5M18 10V5M16 8l2-3 3 3M20 10c2 1 1 3 2 4" fill="none" stroke="#e3262d" strokeWidth="2" />
          <path d="M17 12c-2-2-6-1-6 2s4 4 6 2v-2h-2" fill="none" stroke="#e3262d" strokeWidth="1.600" />
        </svg>
      </Task>
      <Task run={false}>
        <svg width="28" height="23" viewBox="0 0 28 23">
          <rect width="28" height="23" fill="#c4c4c4" /><rect x="1" y="3.500" width="26" height="18.500" fill="#050505" />
          <path d="M3 6l2.500 1.700L3 9.500M8 10h5M15 9.500h3" stroke="#ddd" strokeWidth="1" fill="none" />
        </svg>
      </Task>
      <div className="ml-[6px] h-full bg-[#4e616a]">
        <Task w={61} ml={0}>
          <svg width="28" height="28" viewBox="0 0 28 28">
            <rect width="28" height="28" rx="5" fill="#b30b00" />
            <path d="M6.500 20.500c3.500-2 6.500-7 7.200-13.500.5 5 3 9 8 10.500-5-.8-10 .2-15.200 3z" fill="none" stroke="#fff" strokeWidth="1.700" strokeLinejoin="round" />
          </svg>
        </Task>
      </div>
      <Task ml={6}>
        <svg width="32" height="32" viewBox="0 0 32 32">
          <path d="M2.500 8A14 14 0 0 0 13 28.800L19 18z" fill="#2da94f" />
          <path d="M28 9a14 14 0 0 1-14 20l6-13-2-7z" fill="#fdbd00" />
          <path d="M15 .8A14 14 0 0 0 2.500 8l6 8 6.500-7h13A14 14 0 0 0 15 .8z" fill="#e33b2e" />
          <circle cx="15" cy="15" r="6.500" fill="#fff" /><circle cx="15" cy="15" r="5" fill="#4285f4" />
          <circle cx="23.500" cy="23" r="8" fill="#2a2725" /><circle cx="24" cy="17.500" r="2.800" fill="#9c7a55" />
          <path d="M18 22l3 4M28 21l-2 5" stroke="#6b5a42" strokeWidth="1.500" />
        </svg>
      </Task>
      <Task>
        <svg width="27" height="27" viewBox="0 0 27 27">
          <rect width="27" height="27" rx="3" fill="#2b8cf0" />
          <path d="M0 24L12 11l15 14a3 3 0 0 1-3 2H3a3 3 0 0 1-3-3z" fill="#a8dcff" />
          <path d="M3 27l9-9 9 9z" fill="#1257a8" />
          <circle cx="20.500" cy="6.500" r="2.500" fill="#fff" />
        </svg>
      </Task>
      <div className="ml-[11px] flex h-full w-[51px] flex-col items-center">
        <div className="flex h-[47px] items-center">
          <svg width="28" height="28" viewBox="0 0 28 28">
            <path d="M24 4l3 1-5 22-4-1z" fill="#b69b70" /><path d="M8 1l16 2-5 23L1 20z" fill="#7cc0ce" />
            <path d="M8 1l16 2-1.500 7L6 10z" fill="#c4e6ec" /><path d="M8 1l16 2-.5 2L7.500 3z" fill="#f3f6f6" />
          </svg>
        </div>
        <div className="flex w-full"><div className="h-[3px] w-[41px] bg-[#76b9ed]" /><div className="h-[3px] w-[10px] bg-[#5585b0]" /></div>
      </div>
      <Task>
        <svg width="30" height="30" viewBox="0 0 30 30">
          <ellipse cx="15" cy="8.500" rx="13.500" ry="7" transform="rotate(-14 15 8.500)" fill="#f2f2f2" stroke="#d23a34" strokeWidth="1.800" />
          <path d="M8 12l9 11M24 6l-9 16" stroke="#b9c0c6" strokeWidth="2.400" />
          <ellipse cx="9.500" cy="17" rx="5" ry="3" fill="none" stroke="#4a94d8" strokeWidth="2" transform="rotate(-20 9.500 17)" />
          <ellipse cx="19.500" cy="24" rx="3" ry="4.500" fill="none" stroke="#4a94d8" strokeWidth="2" />
        </svg>
      </Task>
      <div className="grow" />
      <div className="relative mt-[10px] h-[28px] w-[28px]">
        <div className="mt-[2px] h-[25px] w-[25px] rounded-full bg-linear-to-br from-[#f5b83a] to-[#ee6a13]" />
        <div className="absolute -top-px right-[0px] h-[15px] w-[15px] rounded-full bg-[#c62a23] text-center text-[11px] leading-[15px]">1</div>
      </div>
      <div className="flex items-center">
        <Fit w={38} className="ml-[9px] text-[17.500px]">23°C</Fit>
        <Fit w={56} className="ml-[11px] font-['DejaVu_Sans',sans-serif] text-[17px]">مشمس</Fit>
        <svg width="18" height="10" viewBox="0 0 18 10" className="ml-[30px]"><path d="M1 9l8-8 8 8" fill="none" stroke="#fff" strokeWidth="1.500" /></svg>
        <svg width="16" height="16" viewBox="0 0 16 16" className="ml-[14px]" fill="none" stroke="#e8e8e8" strokeWidth="1.300">
          <path d="M1 15.500A14.500 14.500 0 0 1 15.500 1" opacity=".6" /><path d="M4.500 15.500a11 11 0 0 1 11-11M8 15.500A7.500 7.500 0 0 1 15.500 8" /><path d="M11.500 15.500a4 4 0 0 1 4-4" />
          <circle cx="14" cy="14" r="1" fill="#fff" />
        </svg>
        <svg width="21" height="18" viewBox="0 0 21 18" className="ml-[11px]">
          <path d="M1 3h17v9H1z" fill="none" stroke="#fff" strokeWidth="1.400" /><path d="M19.500 5.500v3" stroke="#fff" /><rect x="3" y="5" width="4" height="5" fill="#fff" />
          <circle cx="14.500" cy="12" r="5.500" fill="#0f8a1f" /><path d="M14.500 15.500v-3M14.500 8.500l2 2.500-2 2-2-2z" stroke="#fff" fill="none" strokeWidth="1" />
        </svg>
        <svg width="22" height="18" viewBox="0 0 22 18" className="ml-[7px]" fill="none" stroke="#fff" strokeWidth="1.300">
          <path d="M1 6h3l4-4v14l-4-4H1zM11 6.500c1.200 1.500 1.200 3.500 0 5M14 4.500c2.200 2.500 2.200 6.500 0 9" /><path d="M17 1.500c4 4.500 4 10.500 0 15" opacity=".5" />
        </svg>
        <Fit w={26} className="ml-[13px] text-[14.500px]">FRA</Fit>
      </div>
      <div className="ml-[17px] flex w-[78px] flex-col items-center pt-[2px] text-[15px] leading-[24px]">
        <Fit w={59} className="h-[23px]">10:47 PM</Fit>
        <Fit w={76} className="h-[22px] leading-[22px]">25/05/2025</Fit>
      </div>
      <div className="relative ml-[22px] mt-[15px] h-[30px] w-[32px]">
        <svg width="21" height="21" viewBox="0 0 21 21"><path d="M0 0h20v17h-7l-4 4v-4H0z" fill="#fff" /><path d="M4 5h12M4 8.500h12M4 12h8" stroke="#1b2745" strokeWidth="1.400" /></svg>
        <div className="absolute left-[9px] top-[9px] flex h-[21px] w-[21px] items-center justify-center rounded-full border border-[#8a8f98] bg-[#2d333c] text-[13px] font-bold leading-none">5</div>
      </div>
      <div className="ml-[14px] mr-[4px] h-full w-px bg-[#6d758a]" />
    </footer>
  );
}

export default function App() {
  return (
    <div className="flex h-[1080px] w-[1920px] flex-col overflow-hidden bg-[#1e1e1e] font-['Liberation_Sans',sans-serif]">
      <TitleBar />
      <ToolBar />
      <main className="flex h-[927px] shrink-0">
        <LeftPanel />
        <Strip />
        <div className="w-[148px] shrink-0" />
        <Page />
        <div className="grow" />
        <div className="flex w-[21px] shrink-0 flex-col items-center bg-[#171717]">
          <Chev d="up" c="mt-[7px]" />
          <div className="mt-[192px] h-[25px] w-[19px] bg-[#4d4d4d]" />
          <div className="flex grow items-end pb-[7px]"><Chev d="down" /></div>
        </div>
        <RightPanel />
      </main>
      <Taskbar />
    </div>
  );
}
